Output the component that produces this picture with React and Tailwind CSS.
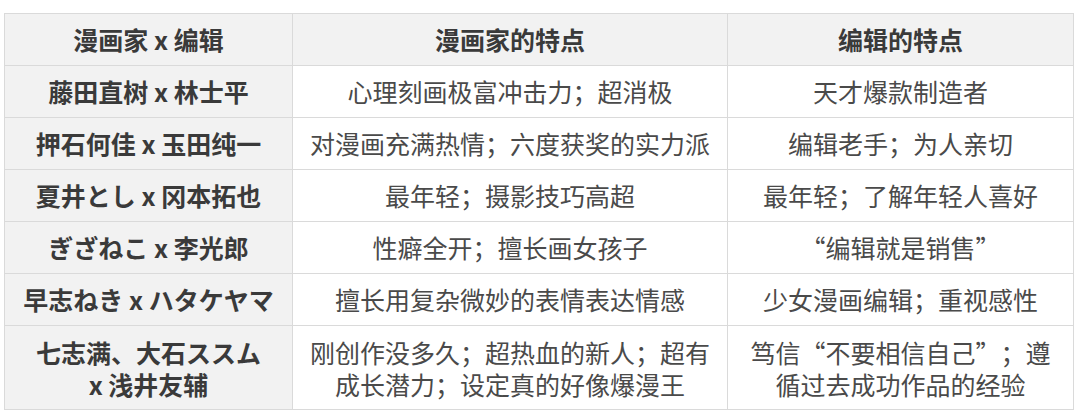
const rows = [
  { pair: '藤田直树 x 林士平', artist: '心理刻画极富冲击力；超消极', editor: '天才爆款制造者' },
  { pair: '押石何佳 x 玉田纯一', artist: '对漫画充满热情；六度获奖的实力派', editor: '编辑老手；为人亲切' },
  { pair: '夏井とし x 冈本拓也', artist: '最年轻；摄影技巧高超', editor: '最年轻；了解年轻人喜好' },
  { pair: 'ぎざねこ x 李光郎', artist: '性癖全开；擅长画女孩子', editor: '“编辑就是销售”' },
  { pair: '早志ねき x ハタケヤマ', artist: '擅长用复杂微妙的表情表达情感', editor: '少女漫画编辑；重视感性' },
];

const App = () => {
  return (
    <div className="w-[1080px] h-[419px] bg-white pt-[13px] pl-[4px] font-['Noto_Sans_CJK_SC','Noto_Sans',sans-serif] text-[25px] [text-spacing-trim:space-all]">
      <table className="table-fixed border-collapse w-[1069px] text-center">
        <colgroup>
          <col className="w-[288px]" />
          <col className="w-[435px]" />
          <col className="w-[346px]" />
        </colgroup>
        <thead>
          <tr className="h-[52px] bg-[#f2f2f2] text-[#3a3a3a] font-bold">
            <th className="border border-[#dadada] px-3">漫画家 x 编辑</th>
            <th className="border border-[#dadada] px-3">漫画家的特点</th>
            <th className="border border-[#dadada] px-3">编辑的特点</th>
          </tr>
        </thead>
        <tbody>
          {rows.map((r, i) => (
            <tr key={i} className="h-[52px]">
              <td className="border border-[#dadada] bg-[#f2f2f2] text-[#3a3a3a] font-bold px-3 whitespace-nowrap">{r.pair}</td>
              <td className="border border-[#dadada] text-[#4a4a4a] px-3">{r.artist}</td>
              <td className="border border-[#dadada] text-[#4a4a4a] px-3">{r.editor}</td>
            </tr>
          ))}
          <tr className="h-[84px] leading-[32px]">
            <td className="border border-[#dadada] bg-[#f2f2f2] text-[#3a3a3a] font-bold px-3">
              七志满、大石ススム<br />x 浅井友辅
            </td>
            <td className="border border-[#dadada] text-[#4a4a4a] px-3">刚创作没多久；超热血的新人；超有成长潜力；设定真的好像爆漫王</td>
            <td className="border border-[#dadada] text-[#4a4a4a] px-3">笃信“不要相信自己”；遵循过去成功作品的经验</td>
          </tr>
        </tbody>
      </table>
    </div>
  );
};

export default App;
